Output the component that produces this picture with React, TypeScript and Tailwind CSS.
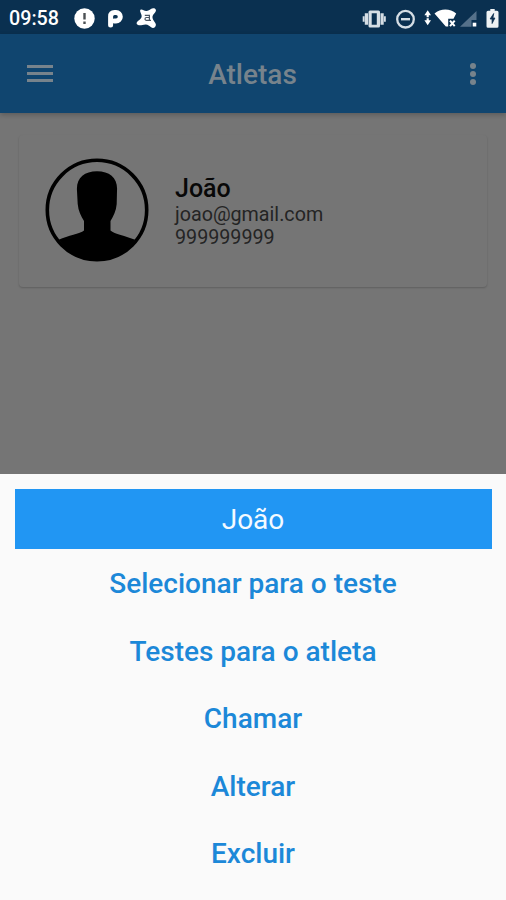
import React from 'react';

const actions = [
  'Selecionar para o teste',
  'Testes para o atleta',
  'Chamar',
  'Alterar',
  'Excluir',
];

const NotificationIcons: React.FC = () => (
  <svg width="84" height="24" viewBox="0 0 84 24" fill="none">
    {/* Alert */}
    <circle cx="10.5" cy="11.5" r="10.2" fill="#fff" />
    <path d="M10.500 6v6.500M10.500 14.500v2.500" stroke="#4b5053" strokeWidth="2.400" />
    {/* Parking */}
    <path
      d="M36.600 17.900V9.500q0-4 4-4h1.400a4 4 0 0 1 0 8.600h-1.800"
      stroke="#fff"
      strokeWidth="5"
      strokeLinecap="round"
      strokeLinejoin="round"
    />
    {/* Antivirus */}
    <path
      d="M66.500 2.800c1.800-1 3.500 1.600 6.200 1.300 2.400-.3 3.800-2.500 6.300-2.800 2.500-.2 3.800 1.900 2.400 3.700-1.500 2-3.400 3.300-2.900 6 .4 2.600 3.200 4.300 3.400 6.500.2 2.700-2.700 4.400-4.800 2.700-1.800-1.500-3.300-3-5.600-2.800-2.700.2-5 1.200-7.400.6-2-.600-2-2.600-.2-4 2-1.500 3.900-2.700 3.800-5-.1-2.100-2.500-5-1.200-6.200Z"
      fill="#fff"
    />
    <path
      d="M70.800 8.300h4.600v5h-3a1.400 1.400 0 0 1 0-2.800h3M75.400 13.300h1.600"
      stroke="#4b5763"
      strokeWidth="1.200"
    />
  </svg>
);

const SystemIcons: React.FC = () => (
  <svg width="138" height="24" viewBox="0 0 138 24" fill="none">
    {/* Vibrate */}
    <g fill="#d5dee5">
      <path d="M8 3.500h8.500q1.500 0 1.500 1.500v14q0 1.500-1.500 1.500H8q-1.500 0-1.500-1.500V5q0-1.500 1.500-1.500zM9.700 6.300v11.400h5.100V6.300z" fillRule="evenodd" />
      <path d="M2.800 6.300h3.200v11.400H2.800zM.7 9.300h1.800v5.400H.7zM18.500 6.300h3.200v11.400h-3.200zM22 9.300h1.800v5.400H22z" />
    </g>
    {/* Do not disturb */}
    <circle cx="43.500" cy="12.200" r="8.300" stroke="#d5dee5" strokeWidth="2.300" />
    <path d="M39 12.200h9" stroke="#d5dee5" strokeWidth="2.400" />
    {/* Data arrows and wifi */}
    <path d="m65.700 3.200 3.300 5h-2.200v2h-2.200v-2h-2.200zM65.700 18.200l-3.300-5h2.200v-2h2.200v2h2.200z" fill="#fff" />
    <path d="M72.500 6.500C78.500 1.200 88.200 1.200 94.200 6.500L91.500 11.800h-5.300v7.600l-2.400.2Z" fill="#fff" />
    <path d="m88 13.600 4.700 5.600m0-5.600-4.700 5.600" stroke="#fff" strokeWidth="2" />
    {/* Mobile signal */}
    <path d="M114.500 4v9h-5v6.800H98z" fill="#55718a" />
    <path d="M110.700 15.700h3.600v3.800h-3.600z" fill="#fff" />
    {/* Battery */}
    <path d="M126 3.700h2.300V2h4.400v1.700h2.300q1.500 0 1.500 1.500v14q0 1.500-1.500 1.500h-9q-1.500 0-1.500-1.500v-14q0-1.500 1.500-1.500z" fill="#eef2f4" />
    <path d="m131.700 6.500-3.600 5.500h2v4.500l2.800-5.500h-2z" fill="#0c3050" stroke="#0c3050" strokeWidth=".8" />
  </svg>
);

const Avatar: React.FC = () => (
  <svg width="104" height="104" viewBox="0 0 104 104" fill="none">
    <circle cx="52" cy="52" r="49.7" stroke="#000" strokeWidth="3.6" />
    <path
      d="M32 33C31 20 39 13.200 52 13.200S73 20 72 33l-.3 13c-.6 7-3.200 12-6.200 17v9.500c4 3.500 15 5.500 24.700 9.200A49.700 49.700 0 0 1 52 101.700 49.700 49.700 0 0 1 13.800 81.700C23 77.500 35 76 39 72.500V63c-3-5-5.700-10-6.300-17Z"
      fill="#000"
    />
  </svg>
);

const App: React.FC = () => {
  return (
    <div className="flex h-[900px] w-[506px] flex-col overflow-hidden bg-[#757575] font-[Roboto,sans-serif]">
      <div className="flex h-[34px] shrink-0 items-center bg-[#0a3050] pt-[3px] pr-[6px] pl-[9px]">
        <span className="w-[65px] text-[19.7px] leading-none font-medium text-white">09:58</span>
        <NotificationIcons />
        <div className="ml-auto">
          <SystemIcons />
        </div>
      </div>

      <header className="relative grid h-[79px] shrink-0 grid-cols-[1fr_auto_1fr] items-center bg-[#10456f] pr-[28px] pl-[27px] shadow-[0_2px_5px_rgba(0,0,0,0.22)]">
        <button className="flex w-[26px] flex-col gap-1" aria-label="Menu">
          <span className="h-[3px] bg-[#77838c]" />
          <span className="h-[3px] bg-[#77838c]" />
          <span className="h-[3px] bg-[#77838c]" />
        </button>
        <h1 className="pt-[3px] text-[28px] leading-none font-medium text-[#77838c]">Atletas</h1>
        <button className="flex w-[10px] flex-col items-center gap-0.5 justify-self-end" aria-label="Mais">
          <span className="size-[6px] rounded-full bg-[#77838c]" />
          <span className="size-[6px] rounded-full bg-[#77838c]" />
          <span className="size-[6px] rounded-full bg-[#77838c]" />
        </button>
      </header>

      <main className="flex-1 px-[19px] pt-[22px]">
        <div className="flex h-[152px] items-center rounded bg-[#757575] pb-0.5 pl-[26px] shadow-[0_1px_2px_rgba(0,0,0,0.2)]">
          <Avatar />
          <div className="ml-[26px] pt-1 text-[19.7px] leading-[22.5px] text-[#242424]">
            <p className="mb-px text-[25px] leading-[28px] font-medium text-[#080808]">João</p>
            <p>joao@gmail.com</p>
            <p>999999999</p>
          </div>
        </div>
      </main>

      <section className="h-[426px] shrink-0 bg-[#fafafa] px-[14.5px] pt-[15px]">
        <h2 className="flex h-[60px] items-center justify-center bg-[#2196f3] pt-0.5 text-[28px] text-[#f4faff]">
          João
        </h2>
        <ul className="pt-[1.5px]">
          {actions.map((action) => (
            <li key={action}>
              <button className="h-[67.5px] w-full text-[28px] font-medium text-[#1c88d8]">
                {action}
              </button>
            </li>
          ))}
        </ul>
      </section>
    </div>
  );
};

export default App;
